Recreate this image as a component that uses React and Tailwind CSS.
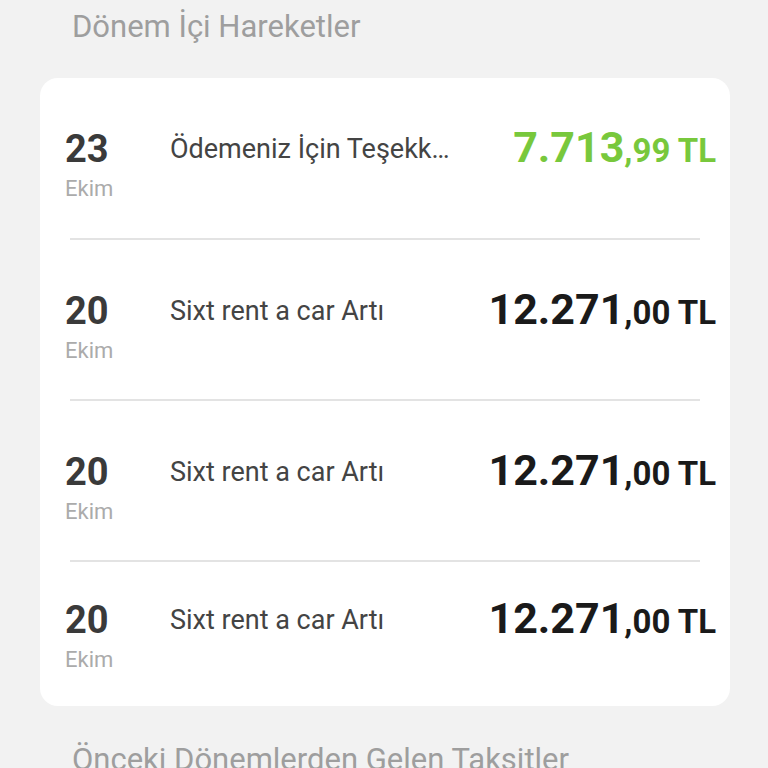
const rows = [
    { day: '23', month: 'Ekim', desc: 'Ödemeniz İçin Teşekkür Ederiz', whole: '7.713', frac: ',99 TL', green: true },
    { day: '20', month: 'Ekim', desc: 'Sixt rent a car Artı', whole: '12.271', frac: ',00 TL' },
    { day: '20', month: 'Ekim', desc: 'Sixt rent a car Artı', whole: '12.271', frac: ',00 TL' },
    { day: '20', month: 'Ekim', desc: 'Sixt rent a car Artı', whole: '12.271', frac: ',00 TL', last: true },
]

export default function App() {
    return (
        <div className="bg-[#f2f2f2] min-h-screen h-[768px] overflow-hidden" style={{ fontFamily: 'Roboto, "Noto Sans", sans-serif' }}>

            {/* section title */}
            <h2 className="pl-[72px] pt-[9px] text-[31px] leading-[36px] text-[#9e9e9e]">
                Dönem İçi Hareketler
            </h2>

            {/* card */}
            <div className="mx-[40px] w-[690px] mt-[33px] bg-white rounded-[18px]">
                {rows.map((r, i) => (
                    <div key={i}>
                        {i > 0 && <div className="mx-[30px] h-[2px] bg-[#e3e3e3]" />}
                        <div className={`flex items-start pl-[25px] pr-[14px] ${r.last ? 'pt-[36px] pb-[28px]' : i === 0 ? 'pt-[49px] pb-[31px]' : 'pt-[49px] pb-[30px]'}`}>
                            <div className="w-[105px] shrink-0">
                                <div className="text-[38px] leading-[44px] font-bold text-[#3a3a3a]">{r.day}</div>
                                <div className="text-[22px] leading-[36px] text-[#ababab]">{r.month}</div>
                            </div>
                            <div className="w-[289px] truncate text-[27px] leading-[44px] text-[#444]">{r.desc}</div>
                            <div className={`ml-auto font-bold whitespace-nowrap leading-[40px] ${r.green ? 'text-[#78c83c]' : 'text-[#1a1a1a]'}`}>
                                <span className="text-[43px]">{r.whole}</span>
                                <span className="text-[33px]">{r.frac}</span>
                            </div>
                        </div>
                    </div>
                ))}
            </div>

            <h2 className="pl-[72px] mt-[36px] text-[31px] leading-[36px] text-[#9e9e9e]">
                Önceki Dönemlerden Gelen Taksitler
            </h2>
        </div>
    )
}
